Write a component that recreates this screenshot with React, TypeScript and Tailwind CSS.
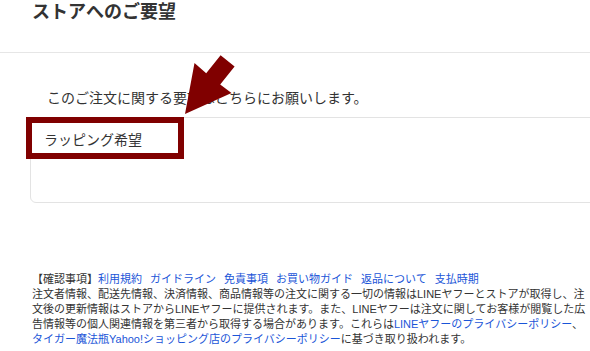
const links = ["利用規約", "ガイドライン", "免責事項", "お買い物ガイド", "返品について", "支払時期"];

function Arrow() {
  // annotation arrow pointing down-left at the request box
  return (
    <svg
      className="pointer-events-none absolute left-0 top-0"
      width={590}
      height={351}
      viewBox="0 0 590 351"
      aria-hidden="true"
    >
      <polygon
        points="185,114 231.5,93 220.2,84.5 234.6,66.5 220.6,55.3 206.2,73.3 194.5,63"
        fill="#800000"
      />
    </svg>
  );
}

export default function App() {
  return (
    <div className="relative h-[351px] w-[590px] overflow-hidden bg-white font-['Liberation_Sans','Noto_Sans_CJK_JP',sans-serif] text-[#333]">
      <h2 className="pl-[32px] pt-[2px] text-[18px] font-bold leading-[20px]">ストアへのご要望</h2>
      <div className="mt-[30px] border-t border-[#e6e6e6]" />

      <section className="pl-[30px]">
        <p className="pl-[17px] pt-[35px] text-[14px] leading-[20px]">
          このご注文に関する要望はこちらにお願いします。
        </p>
        <div className="mt-[9px] h-[86px] w-[600px] rounded-l-[6px] border border-[#e3e3e3] pl-[13px] pt-[12px] text-[14px] leading-[20px]">
          ラッピング希望
        </div>
      </section>

      <footer className="mt-[69px] pl-[32px] text-[11px] leading-[15px] whitespace-nowrap">
        <div className="flex">
          <span>【確認事項】</span>
          <span className="flex gap-[8px] text-[#1a55d8]">
            {links.map((l) => (
              <span key={l}>{l}</span>
            ))}
          </span>
        </div>
        <div>注文者情報、配送先情報、決済情報、商品情報等の注文に関する一切の情報はLINEヤフーとストアが取得し、注</div>
        <div>文後の更新情報はストアからLINEヤフーに提供されます。また、LINEヤフーは注文に関してお客様が閲覧した広</div>
        <div>
          告情報等の個人関連情報を第三者から取得する場合があります。これらは
          <span className="text-[#1a55d8]">LINEヤフーのプライバシーポリシー</span>、
        </div>
        <div>
          <span className="text-[#1a55d8]">タイガー魔法瓶Yahoo!ショッピング店のプライバシーポリシー</span>
          に基づき取り扱われます。
        </div>
      </footer>

      {/* annotation overlay */}
      <div className="pointer-events-none absolute left-[26px] top-[117px] h-[42px] w-[158px] border-[6px] border-[#800000]" />
      <Arrow />
    </div>
  );
}
